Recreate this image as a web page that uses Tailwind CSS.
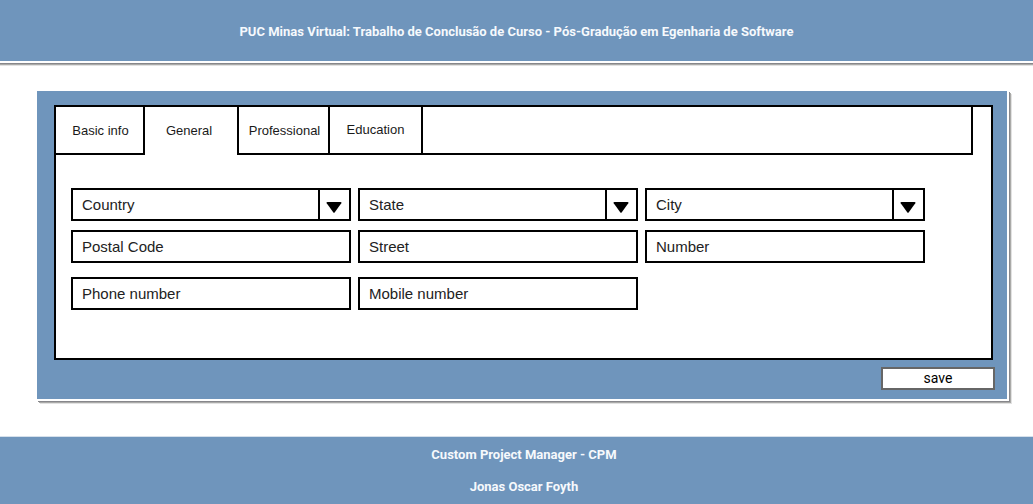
<!DOCTYPE html>
<html lang="pt-BR">
<head>
<meta charset="utf-8">
<meta name="viewport" content="width=device-width, initial-scale=1">
<title>Custom Project Manager - CPM</title>
<script src="https://cdn.jsdelivr.net/npm/@tailwindcss/browser@4"></script>
</head>
<body class="flex min-h-screen flex-col bg-white font-['Liberation_Sans',Arial,sans-serif] text-black">
  <header class="border-b-2 border-white bg-[#6f95bc] pt-[22px] pb-5 text-center shadow-[0_1px_0_#87878b,0_2px_0_#aaaaa8,0_3px_0_#e2e2e2]">
    <h1 class="font-[Roboto,sans-serif] text-[13px] leading-[19px] font-bold text-[#f6f9fc]">PUC Minas Virtual: Trabalho de Conclusão de Curso - Pós-Gradução em Egenharia de Software</h1>
  </header>

  <main class="mt-7 mr-6 mb-[35px] ml-[37px] flex-1">
    <form class="border-r-2 border-b-2 border-white bg-[#6f95bc] pt-[14px] pr-3 pb-[9px] pl-[17px] shadow-[1px_1px_0_#87878b,2px_2px_0_#aaaaa8,3px_3px_0_#e2e2e2]">
      <section class="mr-[2px] border-2 border-black bg-white pb-12">
        <nav class="mr-[18px] flex h-12 text-[13px] text-[#1a1a1a]" role="tablist" aria-label="Sections">
          <button type="button" role="tab" aria-selected="false" class="w-[89px] border-r-2 border-b-2 border-black pt-[2px] pl-[2px]">Basic info</button>
          <button type="button" role="tab" aria-selected="true" class="w-[92px] pr-1">General</button>
          <button type="button" role="tab" aria-selected="false" class="w-[93px] border-x-2 border-b-2 border-black pt-[2px] pl-[2px]">Professional</button>
          <button type="button" role="tab" aria-selected="false" class="w-[93px] border-r-2 border-b-2 border-black">Education</button>
          <div class="flex-1 border-r-2 border-b-2 border-black"></div>
        </nav>

        <div class="mt-[33px] mr-[66px] ml-[15px] flex flex-col gap-[14px] text-[15px] text-[#222]">
          <div class="grid grid-cols-3 gap-x-[7px] gap-y-[9px]">
            <div class="relative">
              <select aria-label="Country" class="block h-[33px] w-full appearance-none border-2 border-black bg-white px-[9px] pt-px"><option>Country</option></select>
              <span class="pointer-events-none absolute inset-y-0 right-0 flex w-[33px] items-center justify-center border-l-2 border-black pt-[6px] pr-[3px]">
                <svg class="h-[11px] w-4" viewBox="0 0 16 11" aria-hidden="true"><path d="M1.5 0h13q1.5 0 .8 1.2L8.8 10.3Q8 11.3 7.2 10.3L.7 1.2Q0 0 1.5 0Z"/></svg>
              </span>
            </div>
            <div class="relative">
              <select aria-label="State" class="block h-[33px] w-full appearance-none border-2 border-black bg-white px-[9px] pt-px"><option>State</option></select>
              <span class="pointer-events-none absolute inset-y-0 right-0 flex w-[33px] items-center justify-center border-l-2 border-black pt-[6px] pr-[3px]">
                <svg class="h-[11px] w-4" viewBox="0 0 16 11" aria-hidden="true"><path d="M1.5 0h13q1.5 0 .8 1.2L8.8 10.3Q8 11.3 7.2 10.3L.7 1.2Q0 0 1.5 0Z"/></svg>
              </span>
            </div>
            <div class="relative">
              <select aria-label="City" class="block h-[33px] w-full appearance-none border-2 border-black bg-white px-[9px] pt-px"><option>City</option></select>
              <span class="pointer-events-none absolute inset-y-0 right-0 flex w-[33px] items-center justify-center border-l-2 border-black pt-[6px] pr-[3px]">
                <svg class="h-[11px] w-4" viewBox="0 0 16 11" aria-hidden="true"><path d="M1.5 0h13q1.5 0 .8 1.2L8.8 10.3Q8 11.3 7.2 10.3L.7 1.2Q0 0 1.5 0Z"/></svg>
              </span>
            </div>
            <input type="text" aria-label="Postal Code" placeholder="Postal Code" class="h-[33px] w-full border-2 border-black px-[9px] placeholder:text-[#222]">
            <input type="text" aria-label="Street" placeholder="Street" class="h-[33px] w-full border-2 border-black px-[9px] placeholder:text-[#222]">
            <input type="text" aria-label="Number" placeholder="Number" class="h-[33px] w-full border-2 border-black px-[9px] placeholder:text-[#222]">
          </div>
          <div class="grid grid-cols-3 gap-x-[7px]">
            <input type="tel" aria-label="Phone number" placeholder="Phone number" class="h-[33px] w-full border-2 border-black px-[9px] placeholder:text-[#222]">
            <input type="tel" aria-label="Mobile number" placeholder="Mobile number" class="h-[33px] w-full border-2 border-black px-[9px] placeholder:text-[#222]">
          </div>
        </div>
      </section>
      <div class="mt-[7px] flex justify-end">
        <button type="submit" class="h-[23px] w-[114px] border-2 border-[#666] bg-white pb-px font-[Roboto,sans-serif] text-sm leading-none">save</button>
      </div>
    </form>
  </main>

  <footer class="border-t border-[#d5e0eb] bg-[#6f95bc] pt-2 pb-2 pl-[15px] text-center font-[Roboto,sans-serif] text-[13px] leading-[19px] font-bold text-[#f6f9fc]">
    <p>Custom Project Manager - CPM</p>
    <p class="mt-[13px]">Jonas Oscar Foyth</p>
  </footer>
</body>
</html>
